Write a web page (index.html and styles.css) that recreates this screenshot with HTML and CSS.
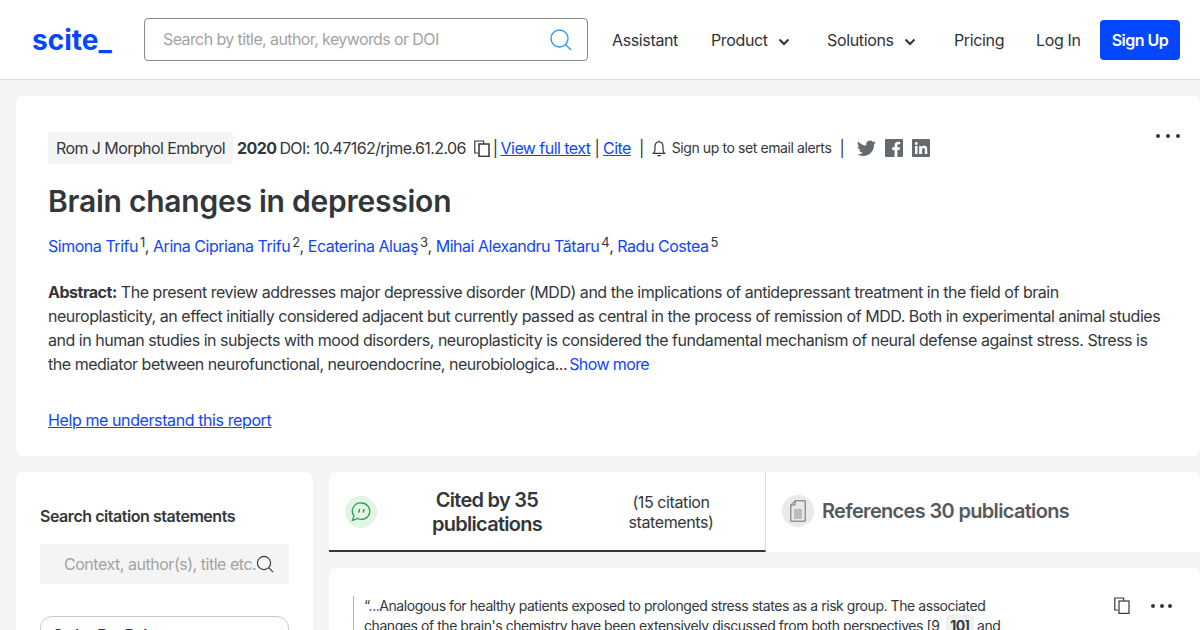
FILE: index.html
```html
<!DOCTYPE html>
<html lang="en">
<head>
    <meta charset="UTF-8">
    <title>Brain changes in depression - scite</title>
    <link rel="stylesheet" href="styles.css">
</head>
<body>
    <header class="topbar">
        <a class="logo" href="#">scite_</a>
        <form class="search">
            <span class="search-text">Search by title, author, keywords or DOI</span>
            <svg class="search-icon" width="24" height="24" viewBox="0 0 24 24" fill="none" stroke="#2d9cf0" stroke-width="1.4"><circle cx="10.5" cy="10.5" r="8.5"/><path d="M16.7 16.7l5.3 5.3"/></svg>
        </form>
        <nav class="nav">
            <a class="nav-assistant" href="#">Assistant</a>
            <a class="nav-product" href="#">Product <svg width="12" height="8" viewBox="0 0 12 8" fill="none" stroke="#2f3336" stroke-width="2"><path d="M1.5 1.5L6 6l4.5-4.5"/></svg></a>
            <a class="nav-solutions" href="#">Solutions <svg width="12" height="8" viewBox="0 0 12 8" fill="none" stroke="#2f3336" stroke-width="2"><path d="M1.5 1.5L6 6l4.5-4.5"/></svg></a>
            <a class="nav-pricing" href="#">Pricing</a>
            <a class="nav-login" href="#">Log In</a>
            <a class="signup" href="#">Sign Up</a>
        </nav>
    </header>

    <main class="page">
        <section class="card report">
            <div class="more more-top"><i></i><i></i><i></i></div>
            <div class="meta">
                <span class="journal">Rom J Morphol Embryol</span>
                <b class="year">2020</b>
                <span class="doi">DOI: 10.47162/rjme.61.2.06</span>
                <svg class="copy" width="17" height="17" viewBox="0 0 17 17" fill="none" stroke="#33373a" stroke-width="1.2"><path d="M4 13H.8V1h8.800v2.800"/><rect x="5" y="4" width="10" height="12.400" stroke-width="1.500"/></svg>
                <span class="sep sep-copy">|</span>
                <a href="#">View full text</a>
                <span class="sep">|</span>
                <a href="#">Cite</a>
                <span class="sep sep-wide">|</span>
                <svg class="bell" width="14" height="17" viewBox="0 0 14 17" fill="none" stroke="#33373a" stroke-width="1.2"><path d="M1.500 13.400c1.100-1 1.500-2 1.500-4.400V6.400C3 3.800 4.700 2 7 2s4 1.800 4 4.400V9c0 2.400.4 3.400 1.500 4.400z"/><path d="M7 2V.4M5.300 15.600h3.400"/></svg>
                <span class="alerts">Sign up to set email alerts</span>
                <span class="sep sep-alerts">|</span>
                <svg class="social" width="19" height="17" viewBox="0 0 24 20" fill="#646a6e"><path d="M24 2.400a9.800 9.800 0 0 1-2.800.8A5 5 0 0 0 23.300.5a9.700 9.700 0 0 1-3.100 1.200 4.900 4.900 0 0 0-8.400 4.500A14 14 0 0 1 1.700 1a4.900 4.900 0 0 0 1.500 6.600 4.900 4.900 0 0 1-2.200-.6v.1a4.900 4.900 0 0 0 3.900 4.800 5 5 0 0 1-2.200.1 4.900 4.900 0 0 0 4.600 3.400A9.900 9.900 0 0 1 0 17.400 13.900 13.900 0 0 0 7.500 19.600c9.100 0 14-7.500 14-14v-.6A10 10 0 0 0 24 2.400z"/></svg>
                <svg class="social" width="18" height="18" viewBox="0 0 18 18"><rect width="18" height="18" rx="1" fill="#646a6e"/><path d="M12.400 18v-7h2.300l.4-2.700h-2.700V6.600c0-.8.2-1.300 1.300-1.300h1.500V2.900c-.3 0-1.100-.1-2.100-.1-2.100 0-3.500 1.300-3.500 3.600v1.900H7.200V11h2.400v7z" fill="#fff"/></svg>
                <svg class="social" width="18" height="18" viewBox="0 0 18 18"><rect width="18" height="18" rx="1" fill="#646a6e"/><path d="M3 7h2.500v8H3zM4.250 3a1.450 1.450 0 1 1 0 2.900 1.450 1.450 0 0 1 0-2.900zM7.200 7h2.400v1.100c.4-.7 1.300-1.300 2.600-1.300 2.600 0 3.100 1.700 3.100 3.900V15h-2.500v-3.800c0-.9 0-2.100-1.300-2.100s-1.400 1-1.400 2V15H7.200z" fill="#fff"/></svg>
            </div>
            <h1>Brain changes in depression</h1>
            <p class="authors">
                <a href="#">Simona Trifu</a><sup>1</sup>, <a href="#">Arina Cipriana Trifu</a><sup>2</sup>, <a href="#">Ecaterina Aluaş</a><sup>3</sup>, <a href="#">Mihai Alexandru Tătaru</a><sup>4</sup>, <a href="#">Radu Costea</a><sup>5</sup>
            </p>
            <p class="abstract"><b>Abstract:</b> The present review addresses major depressive disorder (MDD) and the implications of antidepressant treatment in the field of brain neuroplasticity, an effect initially considered adjacent but currently passed as central in the process of remission of MDD. Both in experimental animal studies and in human studies in subjects with mood disorders, neuroplasticity is considered the fundamental mechanism of neural defense against stress. Stress is the mediator between neurofunctional, neuroendocrine, neurobiologica... <a class="plain" href="#">Show more</a></p>
            <a class="help" href="#">Help me understand this report</a>
        </section>

        <div class="columns">
            <aside class="card sidebar">
                <h2>Search citation statements</h2>
                <div class="side-search">
                    <span>Context, author(s), title etc.</span>
                    <svg width="18" height="18" viewBox="0 0 18 18" fill="none" stroke="#3a3e41" stroke-width="1.2"><circle cx="8" cy="8" r="6.600"/><path d="M12.800 12.800l4.400 4.400"/></svg>
                </div>
                <div class="order">Order By: Relevance</div>
            </aside>

            <div class="results">
                <div class="tabs">
                    <div class="tab tab-active">
                        <span class="round round-green">
                            <svg width="20" height="20" viewBox="0 0 20 20" fill="none" stroke="#2f9e4f" stroke-width="1.300"><path d="M10.500 1a8.200 8.200 0 1 1-3.700 15.500L1.500 18.500l1.400-4.600A8.200 8.200 0 0 1 10.500 1z"/><path d="M8.300 7v1.900c0 .8-.4 1.200-1 1.400M12.700 7v1.900c0 .8-.4 1.200-1 1.400" stroke-width="1.500"/></svg>
                        </span>
                        <strong class="tab-title">Cited by 35 publications</strong>
                        <span class="tab-note">(15 citation statements)</span>
                    </div>
                    <div class="tab tab-refs">
                        <span class="round round-grey">
                            <svg width="16" height="22" viewBox="0 0 16 22" fill="none" stroke="#666a6d" stroke-width="1"><path d="M5 .8h10.200v20.400H.8V5z"/><path d="M5 .8V5H.8"/><path d="M4 10h8M4 12h8M4 14h8M4 16h8M4 18h8" stroke="#8c8f91"/></svg>
                        </span>
                        <strong class="tab-title-refs">References 30 publications</strong>
                    </div>
                </div>

                <article class="card quote">
                    <div class="quote-tools">
                        <svg width="17" height="17" viewBox="0 0 17 17" fill="none" stroke="#33373a" stroke-width="1.200"><path d="M4 13H.8V1h8.800v2.800"/><rect x="5" y="4" width="10" height="12.400"/></svg>
                        <div class="more more-small"><i></i><i></i><i></i></div>
                    </div>
                    <p>“...Analogous for healthy patients exposed to prolonged stress states as a risk group. The associated changes of the brain's chemistry have been extensively discussed from both perspectives [9, <b class="ref">10]</b> and</p>
                </article>
            </div>
        </div>
    </main>
</body>
</html>
```

FILE: styles.css
```css
* {
    box-sizing: border-box;
}
html, body {
    height: 630px;
    overflow: hidden;
}
body {
    margin: 0;
    background-color: #f4f4f4;
    color: #33373a;
    font-family: Inter, 'Liberation Sans', sans-serif;
    font-size: 16px;
    line-height: 24px;
    letter-spacing: -0.47px;
}
a {
    color: #0f45ff;
}
.topbar {
    display: flex;
    align-items: center;
    height: 80px;
    padding: 0 20px 0 32px;
    background-color: white;
    border-bottom: 1px solid #dddddd;
}
.logo {
    width: 112px;
    color: #0546ff;
    font-size: 28px;
    font-weight: 700;
    letter-spacing: 0;
    text-decoration: none;
}
.search {
    display: flex;
    align-items: center;
    justify-content: space-between;
    width: 444px;
    height: 43px;
    padding: 0 14px 0 18px;
    border: 1px solid #8a8a8a;
    border-radius: 4px;
}
.search-text {
    margin-bottom: 2px;
    color: #a3a3a3;
    letter-spacing: -0.6px;
}
.nav {
    display: flex;
    align-items: center;
    margin-left: 24px;
    letter-spacing: -0.36px;
}
.nav a {
    color: #2f3336;
    text-decoration: none;
}
.nav svg {
    margin-left: 6px;
}
.nav-assistant {
    width: 99px;
}
.nav-product {
    width: 116px;
}
.nav-solutions {
    width: 127px;
}
.nav-pricing {
    width: 82px;
}
.nav-login {
    width: 64px;
}
.nav .signup {
    width: 80px;
    height: 40px;
    border-radius: 4px;
    background-color: #0546ff;
    color: white;
    font-weight: 600;
    letter-spacing: -0.5px;
    line-height: 40px;
    text-align: center;
}
.page {
    padding: 16px 0 0 16px;
}
.card {
    background-color: white;
    border-radius: 8px;
}
.report {
    position: relative;
    height: 360px;
    padding: 36px 32px 0;
}
.more {
    display: flex;
    gap: 6px;
}
.more-small {
    gap: 4.5px;
}
.more i {
    width: 4px;
    height: 4px;
    border-radius: 50%;
    background-color: #33373a;
}
.more-top {
    position: absolute;
    top: 38px;
    right: 20px;
}
.meta {
    display: flex;
    align-items: center;
    height: 32px;
    letter-spacing: -0.6px;
    white-space: nowrap;
}
.meta a {
    letter-spacing: -0.55px;
}
.journal {
    height: 32px;
    margin-right: 4px;
    padding: 0 8px;
    border-radius: 4px;
    background-color: #f4f4f4;
    letter-spacing: -0.58px;
    line-height: 32px;
}
.year {
    margin-right: 3px;
    font-weight: 700;
}
.copy {
    margin-left: 8px;
}
.sep {
    margin: 0 4px;
}
.sep-copy {
    margin: 0 3px 0 2px;
}
.sep-wide {
    margin: 0 8px;
}
.bell {
    margin-right: 6px;
}
.alerts {
    font-size: 14px;
    letter-spacing: -0.4px;
}
.sep-alerts {
    margin: 0 13px 0 8px;
}
.social {
    margin-right: 9px;
}
h1 {
    margin: 17px 0 0;
    font-size: 30px;
    font-weight: 600;
    letter-spacing: -0.24px;
    line-height: 40px;
}
.authors {
    margin: 13px 0 0;
    letter-spacing: -0.47px;
}
.authors a, .plain {
    text-decoration: none;
}
.plain {
    margin-left: -2px;
    letter-spacing: -0.6px;
}
sup {
    margin-left: 2px;
    font-size: 13px;
    line-height: 0;
    vertical-align: 5px;
}
.abstract {
    margin: 22px 0 0;
    width: 1120px;
}
.help {
    display: inline-block;
    margin-top: 32px;
    letter-spacing: -0.4px;
}
.columns {
    display: flex;
    gap: 16px;
    margin-top: 16px;
}
.sidebar {
    flex: none;
    width: 297px;
    height: 300px;
    padding: 32px 24px;
}
h2 {
    margin: 0;
    font-size: 16px;
    font-weight: 600;
    letter-spacing: -0.45px;
}
.side-search {
    display: flex;
    align-items: center;
    justify-content: space-between;
    height: 40px;
    margin-top: 16px;
    padding: 0 15px 0 24px;
    border-radius: 4px;
    background-color: #f4f4f4;
    color: #a3a3a3;
    white-space: nowrap;
}
.side-search svg {
    flex: none;
}
.order {
    height: 48px;
    margin-top: 32px;
    padding: 6px 11px;
    border: 1px solid #c8c8c8;
    border-radius: 12px;
    font-weight: 600;
}
.results {
    flex: 1;
    min-width: 0;
}
.tabs {
    display: flex;
    height: 80px;
    border-radius: 8px 8px 0 0;
    background-color: white;
}
.tab {
    display: flex;
    align-items: center;
}
.tab-active {
    width: 437px;
    padding: 2px 20px 0 16px;
    border-right: 1px solid #dddddd;
    border-bottom: 2px solid #33373a;
    text-align: center;
}
.round {
    flex: none;
    display: flex;
    align-items: center;
    justify-content: center;
    width: 32px;
    height: 32px;
    border-radius: 50%;
}
.round-green {
    background-color: #e2f4e4;
}
.round-grey {
    background-color: #e9e9e9;
}
.tab-title {
    width: 220px;
    padding: 0 36px;
    font-size: 20px;
    font-weight: 600;
    letter-spacing: -0.72px;
}
.tab-note {
    flex: 1;
    padding: 0 16px;
    font-size: 16px;
    letter-spacing: -0.4px;
    line-height: 20px;
}
.tab-refs {
    flex: 1;
    padding: 0 0 2px 16px;
}
.tab-title-refs {
    margin-left: 8px;
    color: #55595c;
    font-size: 20px;
    font-weight: 600;
    letter-spacing: -0.67px;
}
.quote {
    position: relative;
    height: 200px;
    margin-top: 16px;
    padding: 28px 0 0 24px;
}
.quote p {
    width: 660px;
    margin: 0;
    padding-left: 10px;
    border-left: 1px solid #b5b5b5;
    font-size: 14px;
    letter-spacing: -0.44px;
    line-height: 20px;
}
.quote-tools {
    position: absolute;
    top: 29px;
    right: 28px;
    display: flex;
    align-items: center;
    gap: 20px;
}
.ref {
    padding: 2px 4px;
    border-radius: 4px;
    background-color: #f0f0f0;
}
```
